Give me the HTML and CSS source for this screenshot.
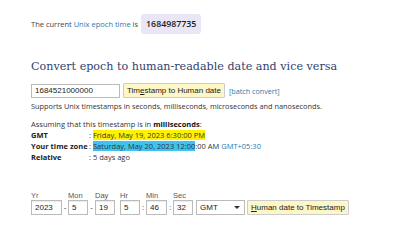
FILE: index.html
```html
<!DOCTYPE html>
<html>
<head>
<meta charset="utf-8">
<link rel="stylesheet" href="styles.css">
</head>
<body>
<div class="page">
  <div class="now">
    <span>The current <a class="link">Unix epoch time</a> is</span>
    <span class="badge">1684987735</span>
  </div>
  <h1 class="title">Convert epoch to human-readable date and vice versa</h1>
  <div class="row">
    <input class="ts" type="text" value="1684521000000">
    <button class="btn">Tim<u>e</u>stamp to Human date</button>
    <a class="link batch">[batch convert]</a>
  </div>
  <p class="note">Supports Unix timestamps in seconds, milliseconds, microseconds and nanoseconds.</p>
  <p class="assume">Assuming that this timestamp is in <b>milliseconds</b>:</p>
  <div class="res">
    <b>GMT</b><span>: <span class="hl-y">Friday, May 19, 2023 6:30:00 PM</span></span>
    <b>Your time zone</b><span>: <span class="hl-b">Saturday, May 20, 2023 12:00</span>:00 AM <a class="link">GMT+05:30</a></span>
    <b>Relative</b><span>: 5 days ago</span>
  </div>
  <div class="form">
    <div class="field"><label>Yr</label><input class="w4" value="2023"></div>
    <span class="sep">-</span>
    <div class="field"><label>Mon</label><input class="w2" value="5"></div>
    <span class="sep s7">-</span>
    <div class="field"><label>Day</label><input class="w2" value="19"></div>
    <span class="sep sp"></span>
    <div class="field"><label>Hr</label><input class="w2" value="5"></div>
    <span class="sep">:</span>
    <div class="field"><label>Min</label><input class="w21" value="46"></div>
    <span class="sep">:</span>
    <div class="field"><label>Sec</label><input class="w2" value="32"></div>
    <div class="field"><label>&nbsp;</label><div class="sel">GMT<span class="arrow"></span></div></div>
    <div class="field"><label>&nbsp;</label><button class="btn btn2"><u>H</u>uman date to Timestamp</button></div>
  </div>
</div>
</body>
</html>
```
FILE: styles.css
```css
html, body { margin: 0; padding: 0; background: #fff; }
body { font-family: "Open Sans", "Noto Sans", sans-serif; color: #333; font-size: 7.5px; }
.page { padding: 13px 0 0 31px; }
.link { color: #2a7ab0; text-decoration: none; }
.now { display: flex; align-items: center; height: 22px; color: #444; }
.badge { margin-left: 3px; background: #e9e7f5; border-radius: 4px; padding: 0 5px; height: 20px; line-height: 20px; font-size: 8.8px; color: #222; font-weight: 600; box-shadow: 0 0 1px rgba(0,0,0,0.1); }
.title { font-family: "DejaVu Serif", serif; font-weight: normal; font-size: 11.15px; color: #2f3f6e; margin: 25px 0 0; line-height: 14px; }
.row { display: flex; align-items: center; margin-top: 9px; height: 15px; }
.ts { box-sizing: border-box; width: 89px; height: 14px; border: 1px solid #bbb; font-family: "Liberation Sans", Arial, sans-serif; font-size: 8px; padding: 0 3px; color: #222; margin: 0; }
.btn { box-sizing: border-box; height: 15px; background: #fdf6c6; border: 1px solid #ccc; font-family: "Liberation Sans", Arial, sans-serif; font-size: 8px; padding: 0 3px; color: #222; margin: 0 0 0 3px; border-radius: 1px; }
.btn u { text-decoration: underline; }
.batch { margin-left: 4px; font-size: 7.2px; }
.note { margin: 3px 0 0; line-height: 11px; font-size: 7.35px; }
.assume { margin: 7px 0 0; line-height: 11px; }
.assume b { color: #111; }
.res { display: grid; grid-template-columns: 58px auto; line-height: 11px; }
.res b { color: #222; }
.hl-y { background: #fff200; }
.hl-b { background: #3dc3ef; }
.form { display: flex; align-items: flex-end; margin-top: 28px; font-family: "Liberation Sans", Arial, sans-serif; }
.field { display: flex; flex-direction: column; }
.field label { font-size: 7.5px; color: #555; line-height: 9px; height: 9px; }
.field input { box-sizing: border-box; height: 15px; border: 1px solid #bbb; font-family: "Liberation Sans", Arial, sans-serif; font-size: 8px; padding: 0 3px; margin: 0; color: #222; box-shadow: inset 0 1px 1px rgba(0,0,0,0.08); }
.w4 { width: 31px; }
.w2 { width: 20px; }
.w21 { width: 21px; }
.sep { width: 6px; text-align: center; font-size: 8px; line-height: 15px; color: #444; }
.s7 { width: 7px; }
.sp { width: 5px; }
.sel { box-sizing: border-box; width: 49px; height: 15px; border: 1px solid #bbb; font-size: 8px; line-height: 13px; padding: 0 3px; color: #222; margin-left: 3px; position: relative; }
.arrow { position: absolute; right: 4px; top: 5px; width: 0; height: 0; border-left: 3px solid transparent; border-right: 3px solid transparent; border-top: 3px solid #333; }
.btn2 { margin-left: 2px; }
```
